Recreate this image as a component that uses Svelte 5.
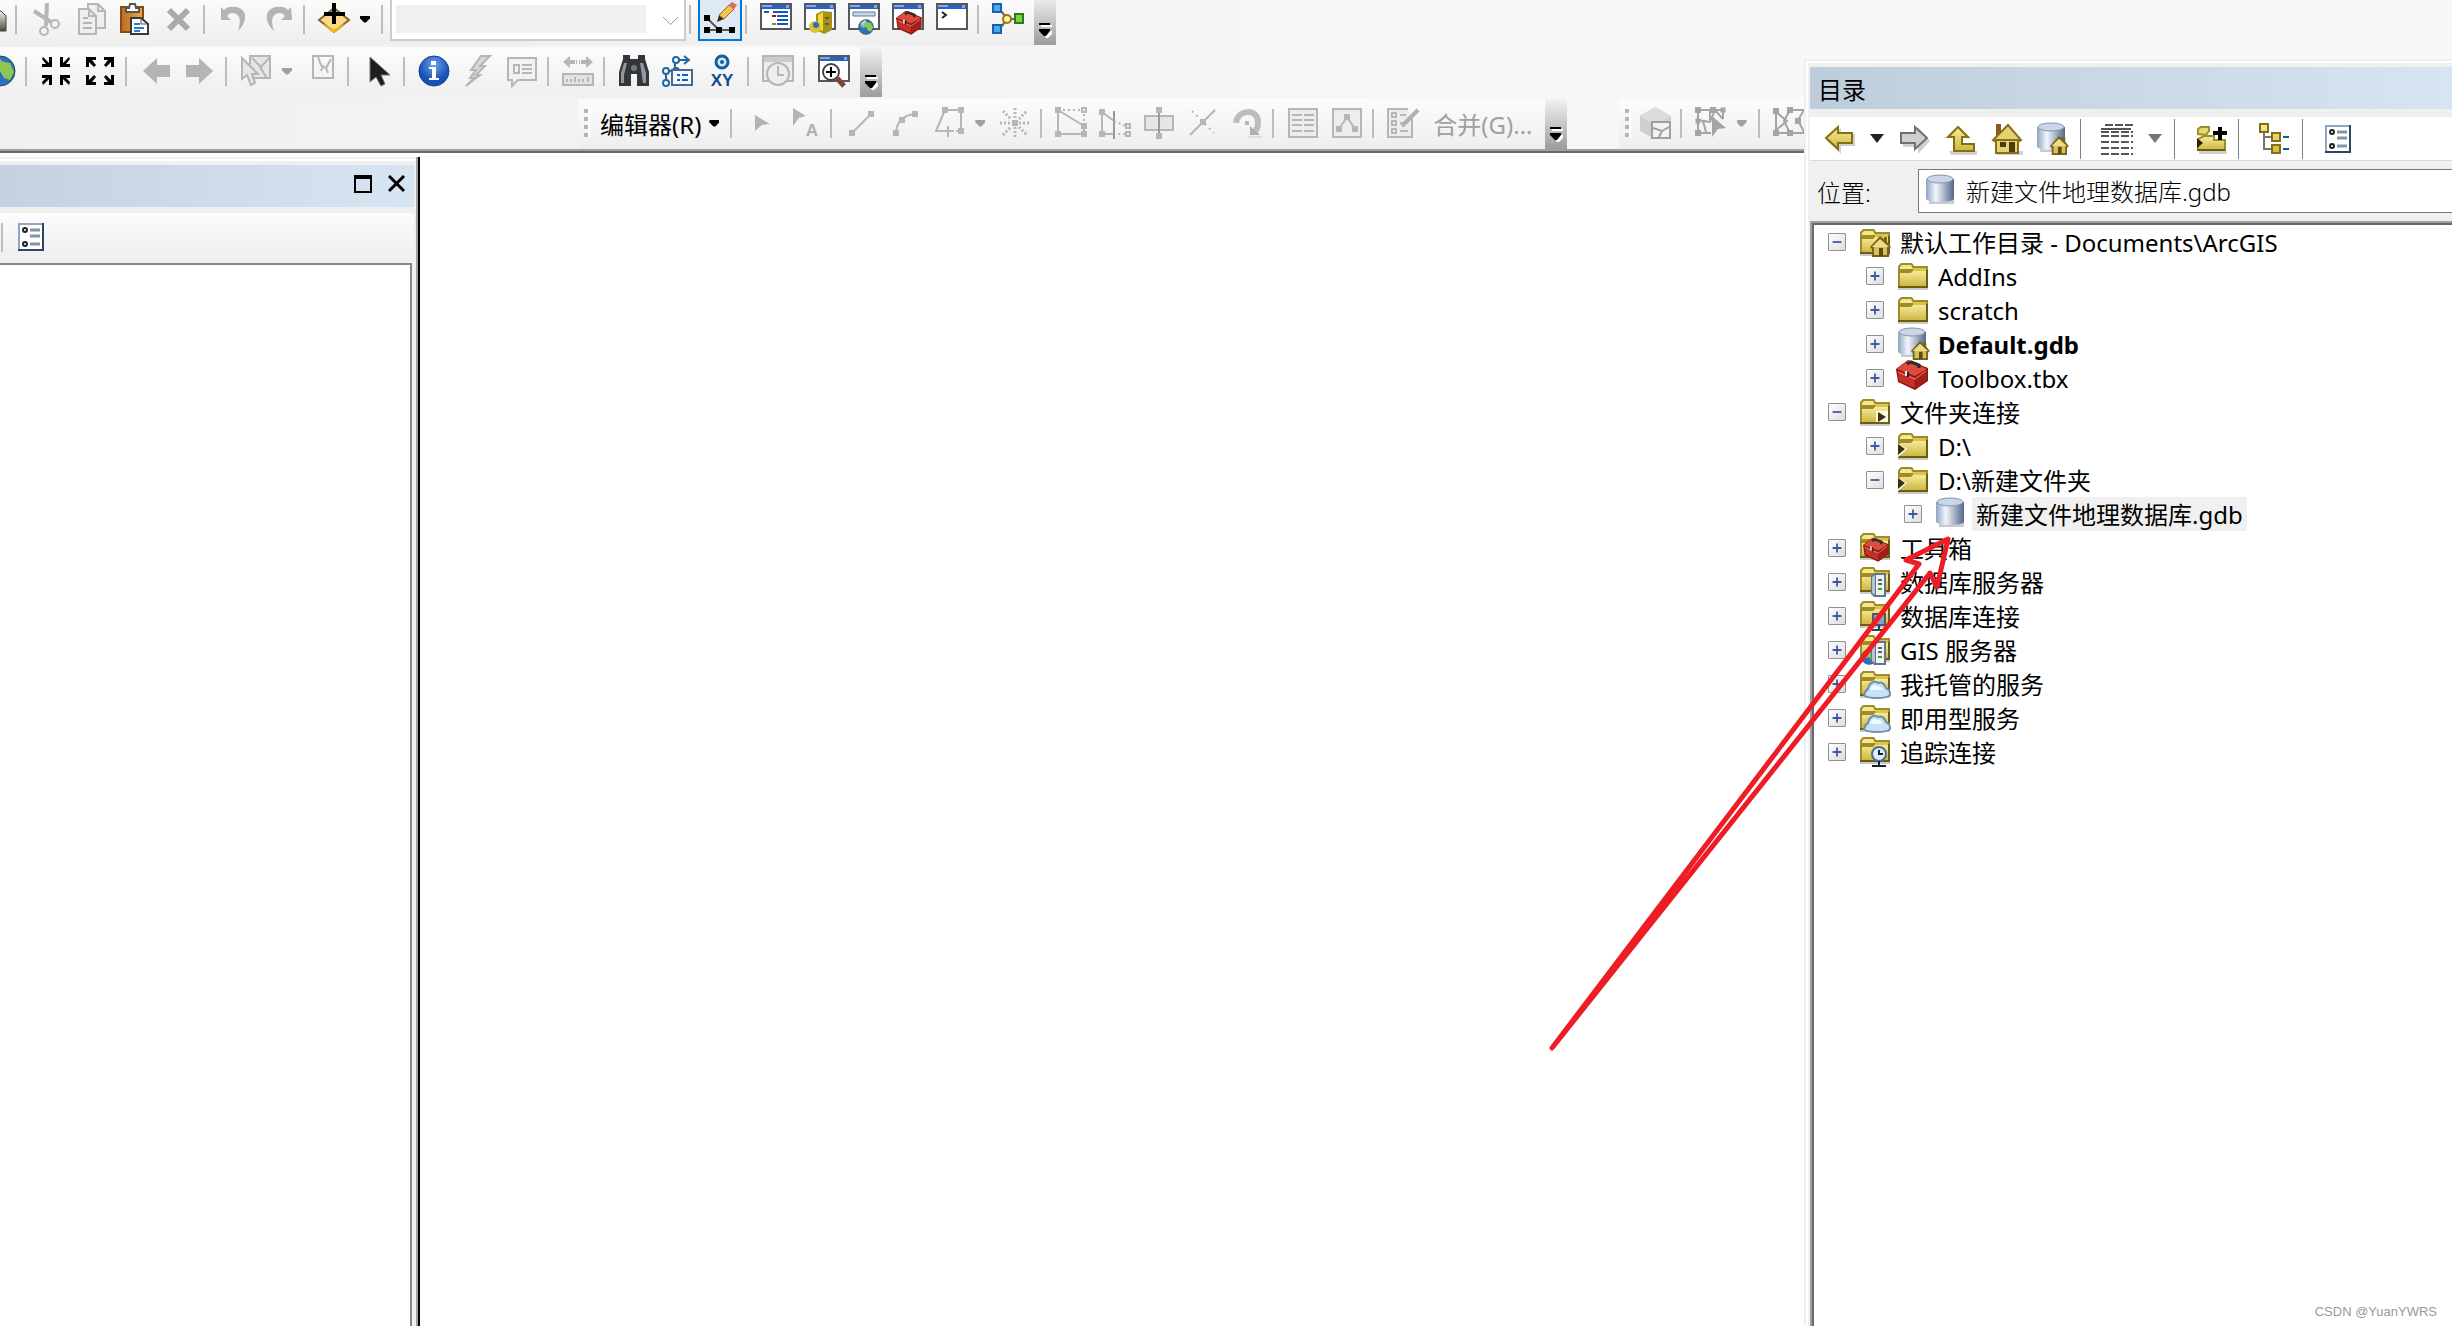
<script lang="ts">
  type Item = {
    kind: 'button' | 'sep' | 'drop' | 'text' | 'scale';
    icon?: string;
    label?: string;
    off?: boolean;
    active?: boolean;
  };

  type Node = {
    label: string;
    icon: string;
    open?: boolean;
    bold?: boolean;
    selected?: boolean;
    children?: Node[];
  };

  const b = (icon: string, label: string, off = false): Item => ({ kind: 'button', icon, label, off });
  const sep: Item = { kind: 'sep' };
  const drop = (label: string, off = false): Item => ({ kind: 'drop', label, off });

  const standard: Item[] = [
    b('print', '打印'), sep,
    b('cut', '剪切', true), b('copy', '复制', true), b('paste', '粘贴'), b('remove', '删除', true), sep,
    b('undo', '撤消', true), b('redo', '恢复', true), sep,
    b('add', '添加数据'), drop('添加数据选项'), sep,
    { kind: 'scale' }, sep,
    { kind: 'button', icon: 'edit', label: '编辑器工具条', active: true }, sep,
    b('toc', '内容列表'), b('catalog', '目录窗口'), b('search', '搜索窗口'), b('toolboxWin', 'ArcToolbox'), b('python', 'Python 窗口'), sep,
    b('model', '模型构建器')
  ];

  const tools: Item[] = [
    b('globe', '全图'), sep,
    b('zoomIn', '固定比例放大'), b('zoomOut', '固定比例缩小'), sep,
    b('back', '返回', true), b('forward', '前进', true), sep,
    b('select', '选择要素', true), drop('选择方式', true), b('clear', '清除所选要素', true), sep,
    b('pointer', '选择元素'), sep,
    b('info', '识别'), b('link', '超链接', true), b('popup', 'HTML 弹出窗口', true), sep,
    b('measure', '测量', true), sep,
    b('find', '查找'), b('route', '查找路径'), b('xy', '转到 XY'), sep,
    b('time', '时间滑块', true), sep,
    b('viewer', '查看器窗口')
  ];

  const editor: Item[] = [
    { kind: 'text', label: '编辑器(R)' }, sep,
    b('editTool', '编辑工具', true), b('editNote', '编辑注记工具', true), sep,
    b('line', '直线段', true), b('arc', '端点弧段', true), b('trace', '追踪', true), drop('构造方法', true), b('point', '点', true), sep,
    b('vertices', '编辑折点', true), b('reshape', '整形要素', true), b('cutPoly', '裁剪面', true), b('split', '分割', true), b('rotate', '旋转', true), sep,
    b('attributes', '属性', true), b('sketch', '草图属性', true), sep,
    b('template', '创建要素', true), { kind: 'text', label: '合并(G)...', off: true }
  ];

  const topology: Item[] = [
    b('cube', '选择拓扑', true), sep,
    b('topoEdit', '拓扑编辑工具', true), drop('拓扑选项', true), sep,
    b('topoAlign', '对齐边', true)
  ];

  const catalogTools: Item[] = [
    b('cBack', '后退'), drop('历史'), b('cForward', '前进'), b('cUp', '向上一级'), b('cHome', '转至主目录'), b('gdbHome', '默认地理数据库'), sep,
    b('cDetails', '视图'), drop('视图选项', true), sep,
    b('cConnect', '连接到文件夹'), sep,
    b('cTree', '切换树面板'), sep,
    b('options', '选项')
  ];

  let nodes: Node[] = $state([
    {
      label: '默认工作目录 - Documents\\ArcGIS', icon: 'folderHome', open: true,
      children: [
        { label: 'AddIns', icon: 'folder' },
        { label: 'scratch', icon: 'folder' },
        { label: 'Default.gdb', icon: 'gdbHome', bold: true },
        { label: 'Toolbox.tbx', icon: 'toolbox' }
      ]
    },
    {
      label: '文件夹连接', icon: 'folderLinks', open: true,
      children: [
        { label: 'D:\\', icon: 'folderLink' },
        {
          label: 'D:\\新建文件夹', icon: 'folderLink', open: true,
          children: [{ label: '新建文件地理数据库.gdb', icon: 'gdb', selected: true }]
        }
      ]
    },
    { label: '工具箱', icon: 'folderTools' },
    { label: '数据库服务器', icon: 'folderServer' },
    { label: '数据库连接', icon: 'folderDb' },
    { label: 'GIS 服务器', icon: 'folderGis' },
    { label: '我托管的服务', icon: 'folderCloud' },
    { label: '即用型服务', icon: 'folderCloud' },
    { label: '追踪连接', icon: 'folderTrack' }
  ]);

  // shared pieces, all on a 32 × 32 grid
  const G = '#b6b6b6';
  const sq = (x: number, y: number, c = G, s = 6) => `<path fill="${c}" d="M${x - s / 2} ${y - s / 2}h${s}v${s}h-${s}z"/>`;
  const win = (body: string) =>
    `<path fill="#fff" stroke="#55585c" stroke-width="2" d="M1 1h30v25H1z"/><path fill="#2a62c4" d="M2 2h28v4H2z"/><path fill="#7ba8ee" d="M2 2h10v2H2zM26 2h3v3h-3z"/>${body}`;
  const wrap = (s: number, x: number, y: number, body: string) => `<g transform="translate(${x} ${y}) scale(${s})">${body}</g>`;
  const base = `<path fill="#c9c9c9" d="M0 27h30v3H0z"/><path fill="#a08c26" d="M0 6l3-3h11l2 3h14v22H0z"/><path fill="#f4e88e" d="M2 7l2-2h9l2 4H2z"/><path fill="#d8c44e" d="M15 8h13v3H15z"/><path fill="url(#gold)" d="M2 13h11l2-2h13v15H2z"/><path fill="#6d5d12" d="M0 26h30v2H0zM28 10h2v18h-2z"/>`;
  const folder = (body = '', lift = 0) => wrap(1, 0, -lift, base) + body;
  const house = `<path fill="#77641a" d="M11 21l10-11 4 3v-2h3v5l4 5-2 2v8H13v-8z"/><path fill="#ecdd8c" d="M13 21l8-8 9 8z"/><path fill="#d7c25a" d="M15 21h13v8H15z"/><path fill="#5d4d12" d="M20 22h4v8h-4z"/>`;
  const cylinder = `<path fill="#c8ccd2" d="M3 24h25v5H3z"/><path fill="url(#steel)" d="M0 4v20c2 4 26 4 28 0V4z"/><ellipse cx="14" cy="4" rx="13" ry="4" fill="#c9d6e8" stroke="#8495ae"/>`;
  const kit = `<path fill="#8d1814" d="M0 10L12 1l20 8v13l-13 9L2 23z"/><path fill="#df4a3d" d="M1 10L12 2l19 8-12 7z"/><path fill="#c42f27" d="M2 12l17 7v10L3 22z"/><path fill="#a51e1a" d="M20 19l11-7v9l-11 8z"/><path fill="none" stroke="#f0857a" d="M2 13l17 7 11-8"/><path fill="none" stroke="#2b2b2b" stroke-width="3" d="M11 5l4-2 8 3v3"/><path fill="#eee" d="M9 12h2v5H9z"/><path fill="#222" d="M11 13h2v5h-2z"/>`;
  const server = `<path fill="#64748a" d="M11 10l4-3h11v24H14l-3-3V10z"/><path fill="#b8c4d4" d="M12 11l3-2v20l-3-2z"/><path fill="#eff3f8" d="M16 9h8v20h-8z"/><path fill="#55657c" d="M18 13h4v2h-4zM18 17h4v2h-4z"/><path fill="#35a51c" d="M18 22h4v2h-4z"/>`;
  const cloud = `<path fill="#c6e0f5" stroke="#6f8fae" stroke-width="2" d="M4 27c1-4 2-5 4-6 1-6 6-9 10-6 4-2 7 2 8 5 4 2 4 4 4 7-3 4-23 4-26 0z"/><path fill="#f0f8fe" d="M10 22c1-5 5-6 7-4 3-1 5 1 6 4z"/>`;
  const earth = `<circle cx="16" cy="16" r="15" fill="#2b6fc2" stroke="#244f3a"/><path fill="#8cc751" d="M12 3l8 4 6 1 4 9-4 8-6-2-4-7-6 2-6-5z"/><path fill="#9ed0fa" d="M5 9l8-7 4 3-7 8z"/>`;

  const icons: Record<string, string> = {
    print: `<path fill="url(#bronze)" stroke="#45432f" d="M4 28V12l3-4h20l5 5v15z"/>`,
    cut: `<g fill="none" stroke="${G}"><path stroke-width="4" d="M4 8l17 11M17 0l-1 23"/><circle cx="14" cy="28" r="4" stroke-width="2"/><circle cx="25" cy="21" r="4" stroke-width="2"/></g>`,
    copy: `<g fill="#efefef" stroke="${G}" stroke-width="2"><path d="M14 1h10l7 7v17H14z"/><path d="M5 6h10l7 7v18H5z"/><path fill="none" d="M15 6v7h7M24 1v7h7M9 15h5M9 20h9M9 25h9"/></g>`,
    paste: `<path fill="url(#wood)" stroke="#884c12" stroke-width="2" d="M3 4h22v25H3z"/><path fill="#fff" stroke="#555" stroke-width="2" d="M8 9V5h3l1-4h5l1 4h3v4z"/><path fill="#fff" stroke="#333a42" stroke-width="2" d="M13 15h10l7 6v10H13z"/><path fill="none" stroke="#2b7bc8" stroke-width="2" d="M16 21h6M16 25h10M16 28h6"/><path fill="none" stroke="#555" d="M23 15v6h6"/>`,
    remove: `<path stroke="#aaa" stroke-width="6" d="M7 7l19 19M26 7L7 26"/>`,
    undo: `<path fill="#b4b4b4" d="M3 4l3 3q4-4 11-3c13 1 13 15 3 24 3-9 3-17-5-18-3 0-4 1-6 3l4 4H3z"/>`,
    redo: `<path fill="#b4b4b4" d="M29 4l-3 3q-4-4-11-3C2 5 2 19 12 28c-3-9-3-17 5-18 3 0 4 1 6 3l-4 4h11z"/>`,
    add: `<path fill="#fbd98e" stroke="#856324" stroke-width="2" d="M1 17L16 5l15 12-15 12z"/><path fill="#f8b614" d="M4 20l12 6 12-6-12 10z"/><path d="M6 9h8V0h4v9h9v4h-9v8h-4v-8H6z"/>`,
    edit: `<path fill="none" stroke="#555" stroke-width="2" d="M3 15l12 12M3 27h25"/>${sq(3, 15, '#000')}${sq(3, 27, '#000')}${sq(15, 27, '#000')}${sq(28, 27, '#000')}<path fill="#3b2c14" d="M13 19l2-7 5 4z"/><path fill="#f6c14d" stroke="#8d6b2a" d="M15 12L25 2l5 4-10 10z"/><path fill="#d96a6a" d="M25 2l3-3 5 3-3 4z"/>`,
    toc: win(`<path stroke="#1557c0" stroke-width="2" d="M4 9h5M13 9h15M17 13h11M17 17h11M17 21h11"/><path fill="#c00" d="M12 12h4v2h-4z"/><path fill="#5aa800" d="M12 20h4v2h-4z"/>`),
    catalog: win(`<path fill="#a5901c" d="M12 11l6-3 10 1v18l-8 4-8-4z"/><path fill="#f1da35" d="M14 12l5-3v19l-5-2z"/><path fill="#6d5d12" d="M21 14h4v2h-4zM21 20h4v2h-4z"/><circle cx="11" cy="24" r="6" fill="#d9c52c"/><circle cx="12" cy="22" r="3" fill="#2b6fc2"/>`),
    search: win(`<path fill="#b8dcf7" stroke="#777" d="M5 9h22v4H5z"/>${wrap(0.5, 10, 16, earth)}`),
    toolboxWin: win(wrap(0.8, 4, 7, kit)),
    python: win(`<path fill="none" stroke="#222" stroke-width="2" d="M6 9l4 3-4 3"/>`),
    model: `<path stroke="#666" stroke-width="2" d="M8 7l6 7M8 25l6-7M18 16h5"/><path fill="#4aa8ee" stroke="#1c5fae" stroke-width="2" d="M1 1h8v8H1zM1 22h8v8H1z"/><circle cx="15" cy="16" r="4" fill="#fff2a8" stroke="#a07400" stroke-width="2"/><path fill="#79cf4c" stroke="#2d7a12" stroke-width="2" d="M23 11h8v9h-8z"/>`,
    globe: earth,
    zoomIn: `<path d="M3 2l6 6V2h3v10H2V9h4L2 4zM29 2l-6 6V2h-3v10h10V9h-4l4-5zM3 30l6-6v6h3V20H2v3h4l-4 4zM29 30l-6-6v6h-3V20h10v3h-4l4 4z"/>`,
    zoomOut: `<path d="M2 2h10v3H8l4 5-2 2-5-5v5H2zM30 2H20v3h4l-4 5 2 2 5-5v5h3zM2 30h10v-3H8l4-5-2-2-5 5v-5H2zM30 30H20v-3h4l-4-5 2-2 5 5v-5h3z"/>`,
    back: `<path fill="#b4b4b4" d="M3 16L17 3v7h13v12H17v7z"/>`,
    forward: `<path fill="#b4b4b4" d="M29 16L15 3v7H2v12h13v7z"/>`,
    select: `<g fill="#e6e6e6" stroke="${G}" stroke-width="2"><path d="M10 1h20v22H10z"/><path fill="none" d="M12 3l9 9 8-9M20 12l6 10"/><path d="M2 3v21l5-4 4 10 4-2-3-9h6z"/></g>`,
    clear: `<g fill="none" stroke="${G}" stroke-width="2"><path d="M7 1h20v22H7z"/><path d="M12 2l3 8 5 3 5-9M17 11l-2 5M20 13l2 5"/></g>`,
    pointer: `<path fill="#1d1d1d" stroke="#777" d="M8 2v25l6-5 5 9 4-2-4-9h9z"/>`,
    info: `<circle cx="16" cy="16" r="15" fill="url(#info)" stroke="#163f96"/><path fill="#fff" d="M13 6h5v4h-5zM11 12h7v11h3v2H11v-2h3v-9h-3z"/>`,
    link: `<path fill="#d8d8d8" stroke="${G}" stroke-width="2" d="M28 1h-9L9 15h5l-6 8h4L4 31l14-11h-4l9-9h-5z"/>`,
    popup: `<path fill="#f2f2f2" stroke="${G}" stroke-width="2" d="M2 3h28v22H12l-6 6v-6H2z"/><path fill="none" stroke="${G}" stroke-width="2" d="M8 10h5v8H8zM16 10h10M16 14h10M16 18h10"/>`,
    measure: `<path fill="${G}" d="M1 7l7-6v4h5v4H8v4zM31 7l-7-6v4h-5v4h5v4zM14 5h1v4h-1zM17 5h1v4h-1z"/><path fill="#e3e3e3" stroke="${G}" stroke-width="2" d="M1 19h30v11H1z"/><path stroke="${G}" stroke-width="2" d="M5 24v3M9 24v3M13 22v5M17 24v3M21 24v3M26 22v5"/>`,
    find: `<path fill="#33363a" d="M5 4V0h7v4h8V0h7v4l4 13v14H19V19h-6v12H1V17z"/><path fill="#92979d" d="M6 8h3L6 20v8H3V18zM22 8h3l3 10v10h-3z"/><circle cx="16" cy="13" r="3" fill="#777"/>`,
    route: `<path fill="none" stroke="#1d6a9e" stroke-width="2" d="M4 28V16h9V5h14M22 1l5 4-5 4"/><g fill="#fff" stroke="#1d6a9e" stroke-width="2"><circle cx="4" cy="28" r="3"/><circle cx="4" cy="16" r="3"/><circle cx="14" cy="16" r="3"/><circle cx="14" cy="5" r="3"/></g><path fill="#f6faff" stroke="#466a94" stroke-width="2" d="M10 15h20v15H10z"/><path stroke="#0f65ad" stroke-width="2" d="M15 20h3M20 20h6M15 25h3M20 25h6"/>`,
    xy: `<circle cx="16" cy="7" r="6" fill="#d4e9f7" stroke="#0f5f9c" stroke-width="3"/><circle cx="16" cy="7" r="2" fill="#0f5f9c"/><text x="16" y="31" text-anchor="middle" font-family="Liberation Sans, sans-serif" font-size="17" font-weight="700" fill="#0e4d8c">XY</text>`,
    time: `<path fill="#ececec" stroke="${G}" stroke-width="2" d="M1 1h30v25H1z"/><path fill="#ccc" d="M2 2h28v5H2z"/><circle cx="16" cy="19" r="11" fill="#eee" stroke="${G}" stroke-width="2"/><path fill="none" stroke="${G}" stroke-width="2" d="M16 11v9h6"/>`,
    viewer: win(`<circle cx="13" cy="17" r="8" fill="#fff" stroke="#444" stroke-width="2"/><path stroke="#000" stroke-width="2" d="M13 12v10M8 17h10"/><path stroke="#834334" stroke-width="5" d="M19 23l7 8"/>`),
    editTool: `<path fill="#b4b4b4" d="M10 8l15 9-8 1-7 6z"/>`,
    editNote: `<path fill="#b4b4b4" d="M4 1l13 8-7 2-6 8z"/><text x="23" y="29" text-anchor="middle" font-family="Liberation Sans, sans-serif" font-size="17" font-weight="700" fill="#b0b0b0">A</text>`,
    line: `<path stroke="${G}" stroke-width="2" d="M7 26L26 7"/>${sq(7, 26)}${sq(26, 7)}`,
    arc: `<path fill="none" stroke="${G}" stroke-width="2" d="M7 26q1-17 19-19"/>${sq(7, 26)}${sq(26, 7)}${sq(13, 13)}`,
    trace: `<path fill="none" stroke="${G}" stroke-width="2" d="M12 3h16v21h-5M12 3L3 24h7M15 19v11M10 24h11"/>${sq(12, 3)}${sq(28, 3)}${sq(28, 24)}`,
    point: `${sq(16, 16)}<path stroke="${G}" stroke-width="3" stroke-dasharray="2 2" d="M1 16h11M20 16h11M16 1v11M16 20v11M4 4l8 8M20 12l8-8M4 28l8-8M20 20l8 8"/>`,
    vertices: `<path fill="none" stroke="${G}" stroke-width="2" d="M3 3v24h26v-8z"/><path fill="none" stroke="${G}" stroke-width="2" stroke-dasharray="2 3" d="M3 3h26v16"/>${sq(3, 3)}${sq(3, 27)}${sq(29, 27)}${sq(29, 19)}${sq(29, 3)}${sq(29, 3, '#eee', 2)}`,
    reshape: `<path fill="none" stroke="${G}" stroke-width="2" d="M3 5v22h12M3 5l12 9"/><path stroke="#999" stroke-width="2" d="M15 4v28"/><path fill="none" stroke="${G}" stroke-width="2" stroke-dasharray="2 3" d="M15 14l14 6v7H16"/>${sq(3, 5)}${sq(3, 27)}${sq(29, 19)}${sq(29, 27)}${sq(29, 19, '#eee', 2)}${sq(29, 27, '#eee', 2)}`,
    cutPoly: `<path fill="#e6e6e6" stroke="${G}" stroke-width="2" d="M2 9h28v14H2z"/><path stroke="#999" stroke-width="2" d="M16 3v26"/>${sq(16, 3)}${sq(16, 29)}`,
    split: `<path stroke="${G}" stroke-width="2" d="M3 28L28 3"/><path stroke="${G}" stroke-width="2" stroke-dasharray="2 4" d="M5 4l22 22"/>${sq(16, 15)}`,
    rotate: `<path fill="none" stroke="#bdbdbd" stroke-width="6" d="M5 16C6 2 28 1 27 16q0 5-3 9"/><path fill="#b0b0b0" d="M19 19v9h10z"/><path fill="#ddd" d="M17 29h14v2H17z"/>${sq(16, 16, G, 4)}`,
    attributes: `<path fill="#ededed" stroke="${G}" stroke-width="2" d="M2 2h28v28H2z"/><path stroke="${G}" stroke-width="2" stroke-dasharray="10 2" d="M5 8h22M5 13h22M5 18h22M5 24h22"/>`,
    sketch: `<path fill="#ededed" stroke="${G}" stroke-width="2" d="M2 2h28v28H2z"/><path fill="none" stroke="${G}" stroke-width="2" d="M8 22l8-12 8 12"/>${sq(16, 10)}${sq(8, 22)}${sq(24, 22)}`,
    template: `<path fill="#ededed" stroke="${G}" stroke-width="2" d="M25 12v18H1V2h20"/><path fill="none" stroke="${G}" stroke-width="2" d="M5 6h4v4H5zM5 14h4v4H5zM5 22h4v4H5zM13 8h6M13 16h3M13 24h8"/><path stroke="#b0b0b0" stroke-width="4" d="M15 19L31 3"/>`,
    cube: `<path fill="#cfcfcf" d="M1 9L16 0l16 9v14L16 32 1 24z"/><path fill="#dcdcdc" d="M1 9L16 0l16 9-16 9z"/><path fill="#f2f2f2" stroke="#a0a0a0" stroke-width="2" d="M13 15h18v16H13z"/><path fill="none" stroke="#a0a0a0" stroke-width="2" d="M14 21l9 3 7-4M23 24l-3 6"/>`,
    topoEdit: `<path fill="none" stroke="#a4a4a4" stroke-width="2" d="M3 3h25v9M3 3v23h13M3 13l12 2 5-12 8 9M15 3v10M8 14l3 11"/>${sq(3, 3, '#a4a4a4')}${sq(18, 3, '#a4a4a4')}${sq(28, 3, '#a4a4a4', 5)}${sq(3, 14, '#a4a4a4', 5)}${sq(3, 26, '#a4a4a4')}<path fill="#a4a4a4" d="M17 9l14 12-8 1-6 8z"/>`,
    topoAlign: `<path fill="none" stroke="#a4a4a4" stroke-width="2" d="M3 3v23M3 5l11 9-11 9M17 3l-6 11 6 12M3 26h28M17 3h14l-6 10 6 12"/>${sq(3, 4, '#a4a4a4')}${sq(3, 26, '#a4a4a4')}${sq(17, 3, '#a4a4a4')}${sq(17, 26, '#a4a4a4')}${sq(25, 14, '#a4a4a4')}`,
    cBack: `<path fill="#d0d0d0" d="M4 18L18 5v6h14v12H18v8z"/><path fill="url(#gold)" stroke="#85700f" stroke-width="2" d="M3 15L15 4v6h14v10H15v6z"/>`,
    cForward: `<path fill="#d0d0d0" d="M31 18L19 4v6H4v14h15v7z"/><path fill="#cfcfcf" stroke="#707070" stroke-width="2" d="M28 15L16 4v6H2v10h14v6z"/>`,
    cUp: `<path fill="#d0d0d0" d="M4 28h28v4H6z"/><path fill="url(#gold)" stroke="#85700f" stroke-width="2" d="M13 4L3 14h6v14h20v-7H17v-7h6z"/>`,
    cHome: `<path fill="#d0d0d0" d="M6 28h26v4H6z"/><path fill="#8a5a1c" d="M5 1h5v12H5z"/><path fill="#e6d274" stroke="#84701c" stroke-width="2" d="M17 2L2 17l3 2v11h22V19l3-2z"/><path fill="#4c3c10" d="M9 19h6v5H9zM18 19h6v10h-6z"/><path stroke="#84701c" stroke-width="2" d="M4 17h25"/>`,
    gdb: cylinder,
    gdbHome: cylinder + wrap(0.9, 3, 4, house),
    cDetails: `<path stroke="#555" stroke-width="2" stroke-dasharray="8 2" d="M4 2h28M0 13h32M0 19h32M0 25h32M0 31h32M0 9h32"/><path stroke="#555" stroke-width="2" d="M0 6h30"/>`,
    cConnect: `<path fill="#d0d0d0" d="M4 28h28v3H4z"/><path fill="#e9da78" stroke="#a08c26" stroke-width="2" d="M3 11V6l3-2h8v4l-3 4z"/><path fill="url(#gold)" stroke="#a08c26" stroke-width="2" d="M3 27V16l6-3h10v4h11v10z"/><path fill="#6d5d12" d="M2 26h28v2H2z"/><path fill="#2a2408" d="M2 15l6 5-6 5z"/><path d="M18 8h5V4h4v4h5v4h-5v5h-4v-5h-5z"/>`,
    cTree: `<path fill="none" stroke="#777" stroke-width="2" d="M5 8v18h8M5 14h8"/><g fill="url(#gold)" stroke="#85700f" stroke-width="2"><path d="M1 1h8v8H1zM13 10h8v8h-8zM13 22h8v8h-8z"/></g><path stroke="#0d5c9f" stroke-width="2" d="M24 14h6M24 26h6"/>`,
    options: `<path fill="#fff" stroke="#8fa6c8" stroke-width="2" d="M3 3h24v26H3z"/><path fill="none" stroke="#2c4766" stroke-width="2" d="M27 2v27H2"/><path stroke="#8793a6" stroke-width="3" d="M14 9h10M14 15h10M14 23h10"/><circle cx="9" cy="9" r="2" fill="#fff" stroke="#222" stroke-width="2"/><circle cx="9" cy="23" r="2" fill="#fff" stroke="#222" stroke-width="2"/>`,
    folder: folder(),
    folderHome: folder(wrap(1, -1, 0, house)),
    folderLinks: folder(`<path fill="#fffbe0" d="M16 15h12v11H16z"/><path fill="#3a300a" d="M18 16l8 5-8 5z"/>`),
    folderLink: folder(`<path fill="#fff" d="M-1 13l10 6-10 9z"/><path fill="#3a300a" d="M0 14l7 5-7 6z"/>`),
    toolbox: wrap(1, -2, -3, kit),
    folderTools: folder(wrap(0.8, 3, 5, kit), 2),
    folderServer: folder(server, 2),
    folderDb: folder(`<path fill="#8fa0b8" stroke="#4c5a70" stroke-width="2" d="M13 14h12v11H13z"/><path stroke="#33404f" stroke-width="2" d="M19 25v5M12 30h14"/>`, 2),
    folderGis: folder(wrap(0.5, 1, 15, earth) + server, 2),
    folderCloud: folder(cloud),
    folderTrack: folder(`<circle cx="19" cy="18" r="7" fill="#d9edfb" stroke="#4d6c8d" stroke-width="2"/><path fill="none" stroke="#123" stroke-width="2" d="M19 14v4h4M19 25v5M12 30h14"/>`, 2)
  };
</script>

{#snippet icon(name: string)}
  <svg class="icon" viewBox="0 0 32 32" aria-hidden="true">{@html icons[name]}</svg>
{/snippet}

{#snippet bar(items: Item[])}
  {#each items as item}
    {#if item.kind === 'sep'}
      <span class="sep"></span>
    {:else if item.kind === 'drop'}
      <button class="drop" aria-label={item.label} disabled={item.off}><i class="caret"></i></button>
    {:else if item.kind === 'text'}
      <button class="text-btn" disabled={item.off}>
        {item.label}
        {#if !item.off}<i class="caret"></i>{/if}
      </button>
    {:else if item.kind === 'scale'}
      <select class="scale" aria-label="地图比例" disabled></select>
    {:else}
      <button class="tool" class:active={item.active} aria-label={item.label} disabled={item.off}>
        {@render icon(item.icon ?? '')}
      </button>
    {/if}
  {/each}
{/snippet}

{#snippet overflow()}
  <button class="overflow" aria-label="工具条选项">
    <svg viewBox="0 0 14 16" aria-hidden="true">
      <path fill="#fff" d="M3 3h11v2H3zM4 9h10v3l-4 4h-2z" />
      <path d="M1 1h11v2H1zM1 7h11v2l-4 5H6L1 9z" />
    </svg>
  </button>
{/snippet}

{#snippet branch(list: Node[])}
  <ul class="branch">
    {#each list as node}
      <li>
        <div class="row">
          <button class="expander" aria-label={node.label} aria-expanded={!!node.open} onclick={() => (node.open = !node.open)}>
            <svg viewBox="0 0 18 18" aria-hidden="true">
              <path fill="#3b57a6" d={node.open ? 'M4 8h10v2H4z' : 'M4 8h4V4h2v4h4v2h-4v4H8v-4H4z'} />
            </svg>
          </button>
          {@render icon(node.icon)}
          <span class="label" class:bold={node.bold} class:selected={node.selected}>{node.label}</span>
        </div>
        {#if node.open && node.children}
          {@render branch(node.children)}
        {/if}
      </li>
    {/each}
  </ul>
{/snippet}

<svg class="defs" aria-hidden="true">
  <defs>
    <linearGradient id="gold" x1="0" y1="0" x2="0" y2="1"><stop stop-color="#f6eb9a" /><stop offset="1" stop-color="#cdb743" /></linearGradient>
    <linearGradient id="steel"><stop stop-color="#8ea4c3" /><stop offset=".35" stop-color="#f3f7fc" /><stop offset="1" stop-color="#52678a" /></linearGradient>
    <linearGradient id="wood"><stop stop-color="#b96a1e" /><stop offset="1" stop-color="#eda94a" /></linearGradient>
    <linearGradient id="bronze" x1="0" y1="0" x2="0" y2="1"><stop stop-color="#f5f2e4" /><stop offset="1" stop-color="#4b4937" /></linearGradient>
    <radialGradient id="info" cy=".3"><stop stop-color="#6ba5f0" /><stop offset="1" stop-color="#1a50b4" /></radialGradient>
  </defs>
</svg>

<main class="app">
  <header class="dock">
    <div class="line first"><div class="bar">{@render bar(standard)}</div>{@render overflow()}</div>
    <div class="line second"><div class="bar">{@render bar(tools)}</div>{@render overflow()}</div>
    <div class="line third">
      <div class="bar"><span class="grip"></span>{@render bar(editor)}</div>{@render overflow()}
      <div class="bar topology"><span class="grip"></span>{@render bar(topology)}</div>
    </div>
  </header>

  <section class="workspace">
    <aside class="contents">
      <div class="title">
        <button class="win-btn" aria-label="最大化"><svg viewBox="0 0 18 18"><path d="M0 0h18v18H0zM2 4v12h14V4z" fill-rule="evenodd" /></svg></button>
        <button class="win-btn" aria-label="关闭"><svg viewBox="0 0 18 18"><path d="M1 1l15 15M16 1L1 16" stroke="#000" stroke-width="3" /></svg></button>
      </div>
      <div class="contents-bar"><span class="sep"></span><button class="tool" aria-label="选项">{@render icon('options')}</button></div>
      <div class="layers"></div>
    </aside>
  </section>

  <aside class="catalog">
    <h1 class="title">目录</h1>
    <div class="catalog-bar">{@render bar(catalogTools)}</div>
    <div class="location">
      <label for="location">位置:</label>
      <div class="field">
        {@render icon('gdb')}
        <select id="location"><option>新建文件地理数据库.gdb</option></select>
      </div>
    </div>
    <nav class="tree">{@render branch(nodes)}</nav>
  </aside>

  <svg class="arrow" viewBox="0 0 410 520" aria-hidden="true">
    <path d="M7 508L374 24l-13-4 42-21-11 48-7-14z" />
  </svg>
  <span class="watermark">CSDN @YuanYWRS</span>
</main>

<style>
  :global(body) {
    background: #fff;
  }
  .app {
    position: relative;
    display: flex;
    flex-direction: column;
    min-height: 100vh;
    overflow: hidden;
    font-family: 'Noto Sans', 'Noto Sans CJK SC', sans-serif;
    font-size: 24px;
    color: #000;
  }
  .defs {
    position: absolute;
    width: 0;
    height: 0;
  }
  button,
  select {
    margin: 0;
    padding: 0;
    border: 0;
    border-radius: 0;
    background: none;
    font: inherit;
    color: inherit;
  }
  .icon {
    display: block;
    flex: none;
    width: 32px;
    height: 32px;
    overflow: visible;
  }

  /* Toolbars */
  .dock {
    display: flex;
    flex-direction: column;
    gap: 2px;
    background: linear-gradient(90deg, #f0f0f0, #f7f7f7 60%);
    border-bottom: 2px solid #696969;
    box-shadow: inset 0 -2px #a0a0a0;
    padding-bottom: 2px;
  }
  .line {
    display: flex;
    height: 50px;
  }
  .first {
    height: 45px;
    align-items: flex-end;
    margin-left: -32px;
  }
  .second {
    margin-left: -22px;
  }
  .third {
    margin-left: 578px;
  }
  .bar {
    display: flex;
    align-items: center;
    flex: none;
    height: 50px;
    padding-right: 4px;
    padding-bottom: 2px;
    box-sizing: border-box;
    border-radius: 4px 0 0 4px;
    background: linear-gradient(#fcfcfc, #eee);
  }
  .topology {
    margin-left: 52px;
  }
  .tool {
    display: flex;
    align-items: center;
    justify-content: center;
    flex: none;
    width: 44px;
    height: 44px;
    box-sizing: border-box;
  }
  .tool.active {
    border: 2px solid #0078d7;
    background: #dde9f5;
  }
  .sep {
    flex: none;
    width: 2px;
    height: 29px;
    margin: 0 7px 0 3px;
    background: #bdbdbd;
  }
  .drop {
    display: flex;
    flex: none;
    box-sizing: border-box;
    width: 22px;
    padding-left: 4px;
  }
  .caret {
    display: block;
    flex: none;
    width: 10px;
    height: 7px;
    background: #000;
    clip-path: polygon(0 0, 100% 0, 100% 40%, 60% 100%, 40% 100%, 0 40%);
  }
  button:disabled .caret {
    background: #a0a0a0;
  }
  .text-btn {
    display: flex;
    align-items: center;
    gap: 8px;
    padding: 0 8px;
    white-space: nowrap;
  }
  .text-btn:disabled {
    color: #a0a0a0;
  }
  .scale {
    width: 296px;
    height: 44px;
    box-sizing: border-box;
    border: 2px solid #ccc;
    appearance: none;
    opacity: 1;
    background:
      linear-gradient(#f0f0f0, #f0f0f0) 4px 6px / 250px 28px no-repeat,
      linear-gradient(45deg, transparent 44%, #999 44% 56%, transparent 56%) 270px 18px / 8px 8px no-repeat,
      linear-gradient(-45deg, transparent 44%, #999 44% 56%, transparent 56%) 277px 18px / 8px 8px no-repeat,
      #fff;
    background:
      linear-gradient(#f0f0f0, #f0f0f0) 4px 6px / 250px 28px no-repeat,
      linear-gradient(45deg, transparent 44%, #999 44% 56%, transparent 56%) 271px 18px / 8px 8px no-repeat,
      linear-gradient(-45deg, transparent 44%, #999 44% 56%, transparent 56%) 278px 18px / 8px 8px no-repeat,
      #fff;
  }
  .grip {
    flex: none;
    width: 4px;
    height: 28px;
    margin: 0 4px 0 6px;
    background: repeating-linear-gradient(#b4b4b4 0 4px, transparent 4px 8px);
    box-shadow: 2px 0 #fff;
  }
  .overflow {
    display: flex;
    align-items: flex-end;
    justify-content: center;
    flex: none;
    width: 22px;
    height: 50px;
    padding-bottom: 7px;
    border-top-right-radius: 3px;
    background: linear-gradient(#f2f2f2, #c8c8c8 50%, #9c9c9c);
  }
  .overflow svg {
    width: 14px;
    height: 16px;
  }

  /* Table of contents */
  .workspace {
    display: flex;
    flex: 1;
    padding-top: 4px;
    background: #fff;
  }
  .contents {
    display: flex;
    flex-direction: column;
    width: 420px;
    box-sizing: border-box;
    border-right: 2px solid #000;
    padding: 8px 4px 0 0;
    background: #f0f0f0;
    box-shadow: inset -2px 0 #a0a0a0, inset 0 2px #f0f0f0, inset 0 4px #fff;
  }
  .title {
    display: flex;
    align-items: center;
    height: 42px;
    margin: 0;
    background: linear-gradient(90deg, #becddc, #d7e4f2);
    font-size: 24px;
    font-weight: 400;
  }
  .contents .title {
    justify-content: flex-end;
    gap: 16px;
    box-sizing: border-box;
    padding: 0 8px 4px 0;
    background: linear-gradient(90deg, #c4d1df, #d7e4f2);
  }
  .win-btn {
    width: 18px;
    height: 18px;
  }
  .win-btn svg {
    display: block;
    width: 18px;
    height: 18px;
  }
  .contents-bar {
    display: flex;
    align-items: center;
    height: 50px;
    box-sizing: border-box;
    padding-bottom: 2px;
    margin-top: 6px;
    margin-left: -2px;
    border-radius: 0 4px 4px 0;
    background: linear-gradient(#fcfcfc, #eee);
  }
  .layers {
    flex: 1;
    margin-right: 2px;
    border-top: 2px solid #828790;
    border-right: 2px solid #828790;
    background: #fff;
  }

  /* Catalog window, floats over the dock */
  .catalog {
    position: absolute;
    top: 59px;
    right: 0;
    bottom: 0;
    display: flex;
    flex-direction: column;
    width: 648px;
    box-sizing: border-box;
    border: solid #efefef;
    border-width: 2px 0 0 2px;
    padding: 6px 0 0 4px;
    background: #f0f0f0;
    box-shadow: inset 2px 2px #fff;
  }
  .catalog .title {
    padding-left: 8px;
  }
  .catalog-bar {
    display: flex;
    align-items: center;
    height: 43px;
    margin-top: 8px;
    padding-left: 6px;
    border-bottom: 1px solid #d9d9d9;
    background: #fff;
  }
  .catalog-bar .tool {
    width: 46px;
  }
  .catalog-bar .sep {
    width: 1px;
    height: 40px;
    margin: 0 13px 0 4px;
    background: #808080;
  }
  .catalog-bar .drop {
    width: 30px;
    padding-left: 8px;
  }
  .catalog-bar .caret {
    width: 14px;
    height: 9px;
    background: #222;
    clip-path: polygon(0 0, 100% 0, 50% 100%);
  }
  .catalog-bar button:disabled .caret {
    background: #777;
  }
  .location {
    display: flex;
    align-items: center;
    padding: 8px 0;
  }
  .location label {
    width: 100px;
    padding-left: 7px;
    box-sizing: border-box;
    font-weight: 300;
  }
  .field {
    display: flex;
    align-items: center;
    flex: 1;
    gap: 8px;
    margin-left: 8px;
    height: 44px;
    box-sizing: border-box;
    border: 1px solid #7a7a7a;
    border-right: 0;
    padding-left: 7px;
    background: #fff;
  }
  .field select {
    flex: 1;
    height: 40px;
    appearance: none;
    font-weight: 300;
  }
  .tree {
    flex: 1;
    border: solid #a0a0a0;
    border-width: 2px 0 0 2px;
    box-shadow: inset 2px 2px #696969;
    padding: 2px 0 0 2px;
    background: #fff;
  }
  .branch {
    margin: 0;
    padding: 0;
    list-style: none;
  }
  .tree > .branch {
    padding-left: 14px;
  }
  .branch .branch {
    padding-left: 38px;
  }
  .row {
    display: flex;
    align-items: center;
    height: 34px;
  }
  .expander {
    width: 18px;
    height: 18px;
    margin-right: 14px;
    box-sizing: border-box;
    border: 1px solid #919191;
    border-radius: 1px;
    background: linear-gradient(135deg, #fff, #ddd);
  }
  .expander svg {
    display: block;
    width: 16px;
    height: 16px;
  }
  .label {
    height: 34px;
    margin-left: 4px;
    padding: 0 4px;
    line-height: 36px;
    white-space: nowrap;
  }
  .bold {
    font-weight: 700;
  }
  .selected {
    background: #f0f0f0;
  }

  /* Annotation drawn over the windows */
  .arrow {
    position: absolute;
    top: 540px;
    right: 497px;
    width: 410px;
    height: 520px;
    overflow: visible;
    fill: none;
    stroke: #ee1c24;
    stroke-width: 5px;
    stroke-linejoin: round;
  }
  .watermark {
    position: absolute;
    right: 15px;
    bottom: 6px;
    font: 13px/16px 'Liberation Sans', sans-serif;
    color: #999;
  }
</style>
